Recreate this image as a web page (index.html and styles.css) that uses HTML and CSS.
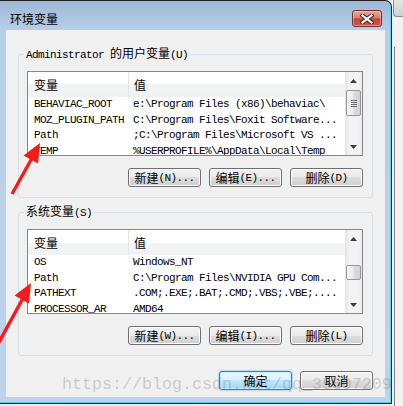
FILE: index.html
```html
<!DOCTYPE html>
<html>
<head>
<meta charset="utf-8">
<link rel="stylesheet" href="styles.css">
</head>
<body>
<div class="desk">
  <div class="win">
    <div class="titlebar">
      <span class="title">环境变量</span>
      <button class="close"><svg width="14" height="10" viewBox="0 0 14 10"><path d="M2.5 1.5 L11.5 8.5 M11.5 1.5 L2.5 8.5" stroke="#4b2622" stroke-width="4.2" stroke-linecap="square" fill="none"/><path d="M2.5 1.5 L11.5 8.5 M11.5 1.5 L2.5 8.5" stroke="#ffffff" stroke-width="2.2" stroke-linecap="square" fill="none"/></svg></button>
    </div>
    <div class="client">
      <fieldset class="group">
        <legend>Administrator <span class="c">的用户变量</span>(U)</legend>
        <div class="list">
          <div class="lv">
            <div class="hdr"><div class="hc1"><span class="c">变量</span></div><div class="hc2"><span class="c">值</span></div></div>
            <div class="row"><div class="c1">BEHAVIAC_ROOT</div><div class="c2">e:\Program Files (x86)\behaviac\</div></div>
            <div class="row"><div class="c1">MOZ_PLUGIN_PATH</div><div class="c2">C:\Program Files\Foxit Software...</div></div>
            <div class="row"><div class="c1">Path</div><div class="c2">;C:\Program Files\Microsoft VS ...</div></div>
            <div class="row"><div class="c1">TEMP</div><div class="c2">%USERPROFILE%\AppData\Local\Temp</div></div>
          </div>
          <div class="sb">
            <div class="ar"><svg width="7" height="4"><polygon points="0,4 3.5,0 7,4" fill="#3c3c3c"/></svg></div>
            <div class="tr"><div class="thumb t1"><div class="grip"></div></div></div>
            <div class="ar"><svg width="7" height="4"><polygon points="0,0 7,0 3.5,4" fill="#3c3c3c"/></svg></div>
          </div>
        </div>
        <div class="btns">
          <button class="btn"><span class="c">新建</span>(N)...</button>
          <button class="btn"><span class="c">编辑</span>(E)...</button>
          <button class="btn"><span class="c">删除</span>(D)</button>
        </div>
      </fieldset>
      <fieldset class="group g2">
        <legend><span class="c">系统变量</span>(S)</legend>
        <div class="list">
          <div class="lv">
            <div class="hdr"><div class="hc1"><span class="c">变量</span></div><div class="hc2"><span class="c">值</span></div></div>
            <div class="row"><div class="c1">OS</div><div class="c2">Windows_NT</div></div>
            <div class="row"><div class="c1">Path</div><div class="c2">C:\Program Files\NVIDIA GPU Com...</div></div>
            <div class="row"><div class="c1">PATHEXT</div><div class="c2">.COM;.EXE;.BAT;.CMD;.VBS;.VBE;....</div></div>
            <div class="row"><div class="c1">PROCESSOR_AR</div><div class="c2">AMD64</div></div>
          </div>
          <div class="sb">
            <div class="ar"><svg width="7" height="4"><polygon points="0,4 3.5,0 7,4" fill="#3c3c3c"/></svg></div>
            <div class="tr"><div class="thumb t2"></div></div>
            <div class="ar"><svg width="7" height="4"><polygon points="0,0 7,0 3.5,4" fill="#3c3c3c"/></svg></div>
          </div>
        </div>
        <div class="btns">
          <button class="btn"><span class="c">新建</span>(W)...</button>
          <button class="btn"><span class="c">编辑</span>(I)...</button>
          <button class="btn"><span class="c">删除</span>(L)</button>
        </div>
      </fieldset>
      <div class="dlg">
        <button class="btn def"><span class="c">确定</span></button>
        <button class="btn"><span class="c">取消</span></button>
      </div>
    </div>
  </div>
  <div class="behind">
    <div class="bh-top"></div>
    <div class="bh-line"></div>
  </div>
</div>
<div class="wm">https://blog.csdn.net/qq_35507209</div>
<svg class="arrows" width="403" height="406" viewBox="0 0 403 406">
  <line x1="12" y1="194" x2="31.5" y2="159" stroke="#f51b1b" stroke-width="3.4"/>
  <polygon points="40,143 38,163.5 23.5,155.5" fill="#f51b1b"/>
  <line x1="-2" y1="344" x2="22.5" y2="299" stroke="#f51b1b" stroke-width="3.4"/>
  <polygon points="31,283 29,303.5 14.5,295.5" fill="#f51b1b"/>
</svg>
</body>
</html>
```

FILE: styles.css
```css
* { box-sizing: border-box; }
html, body { margin: 0; padding: 0; }
body {
  width: 403px;
  height: 406px;
  overflow: hidden;
  position: relative;
  background: #ececec;
  font-family: "Liberation Mono", "Noto Sans CJK SC", monospace;
  font-size: 11px;
  letter-spacing: -0.6px;
  color: #000;
}
.c {
  font-family: "Noto Sans CJK SC", sans-serif;
  font-size: 12px;
  letter-spacing: 0;
}
.desk { display: flex; align-items: flex-start; height: 406px; }

.win {
  flex: none;
  width: 392px;
  height: 404px;
  border: 1px solid #1e1e1e;
  border-left: 0;
  border-radius: 0 7px 0 0;
  background: linear-gradient(#9db8d7 0, #b8cfe8 30px, #bdd3eb 100%);
  box-shadow: inset -1px -1px 0 #5ccdee;
  display: flex;
  flex-direction: column;
}
.titlebar {
  height: 29px;
  display: flex;
  justify-content: space-between;
  align-items: flex-start;
  padding-left: 10px;
}
.title {
  font-family: "Noto Sans CJK SC", sans-serif;
  font-size: 12px;
  letter-spacing: 0;
  line-height: 16px;
  margin-top: 10px;
}
.close {
  width: 30px;
  height: 17px;
  margin: 9px 9px 0 0;
  padding: 0;
  border: 1px solid #7a2e27;
  border-radius: 3px;
  background: linear-gradient(#e9a697 0, #d8806f 45%, #c2463b 52%, #c65c4e 100%);
  box-shadow: inset 0 0 0 1px rgba(255, 220, 210, 0.45);
  display: flex;
  align-items: center;
  justify-content: center;
}
.client {
  flex: 1;
  margin: 0 6px 6px 6px;
  background: #f0f0f0;
  padding: 16px 12px 0;
  display: flex;
  flex-direction: column;
}
.group {
  margin: 0;
  min-width: 0;
  border: 1px solid #d5dfe5;
  border-radius: 3px;
  padding: 9px 9px 10px 8px;
}
.group legend {
  padding: 0 2px;
  margin-left: -3px;
  line-height: 14px;
}
.g2 { margin-top: 6px; }

.list {
  height: 85px;
  border: 1px solid #828790;
  background: #fff;
  display: flex;
}
.lv { flex: 1; min-width: 0; overflow: hidden; }
.hdr {
  height: 25px;
  display: flex;
  background: linear-gradient(#ffffff 0, #ffffff 50%, #f3f4f6 50%, #f1f2f4 100%);
}
.hc1 {
  width: 101px;
  border-right: 1px solid #e3e4e6;
  padding-left: 6px;
  display: flex;
  align-items: center;
}
.hc2 { padding-left: 5px; display: flex; align-items: center; }
.row {
  height: 15.5px;
  line-height: 15.5px;
  display: flex;
  white-space: nowrap;
}
.c1 { width: 100px; flex: none; padding-left: 6px; overflow: hidden; }
.c2 { padding-left: 5px; }

.sb {
  width: 17px;
  flex: none;
  display: flex;
  flex-direction: column;
  background: linear-gradient(to right, #e4e4e4 0, #f3f3f3 25%, #f3f3f3 80%, #eaeaea 100%);
}
.ar { height: 17px; flex: none; display: flex; align-items: center; justify-content: center; }
.tr { flex: 1; }
.thumb {
  margin: 0 1px;
  border: 1px solid #979797;
  border-radius: 2px;
  background: linear-gradient(to right, #f5f5f5 0, #ececec 45%, #dcdcdc 55%, #d2d2d2 100%);
  display: flex;
  align-items: center;
  justify-content: center;
}
.t1 { margin-top: 1px; height: 26px; }
.t2 { margin-top: 18px; height: 15px; }
.grip {
  width: 6px;
  height: 7px;
  background: repeating-linear-gradient(#6e6e6e 0, #6e6e6e 1px, transparent 1px, transparent 2px);
}

.btns {
  display: flex;
  justify-content: flex-end;
  gap: 8px;
  margin-top: 12px;
}
.btn {
  width: 73px;
  height: 19px;
  padding: 0;
  border: 1px solid #707070;
  border-radius: 3px;
  background: linear-gradient(#f2f2f2 0, #ebebeb 50%, #dddddd 50%, #cfcfcf 100%);
  box-shadow: inset 0 0 0 1px #fbfbfb;
  font: inherit;
  letter-spacing: inherit;
  color: #000;
  line-height: 14px;
  display: flex;
  align-items: center;
  justify-content: center;
}
.dlg {
  display: flex;
  justify-content: flex-end;
  gap: 8px;
  margin-top: 15px;
}
.btn.def {
  border-color: #3c7fb1;
  background: linear-gradient(#eaf6fd 0, #d9f0fc 50%, #bee6fd 50%, #a7d9f5 100%);
  box-shadow: inset 0 0 0 1px #c7ecfd, 0 0 1px 1px rgba(80, 170, 230, 0.35);
}

.behind {
  flex: 1;
  height: 406px;
  background: #f2f2f2;
  display: flex;
  flex-direction: column;
}
.bh-top {
  height: 17px;
  margin-left: 1px;
  border: 1px solid #8c8c8c;
  border-top: 0;
  border-right: 0;
  border-radius: 0 0 0 4px;
  background: linear-gradient(#e6e6e6, #cfcfcf);
}
.bh-line {
  flex: 1;
  margin: 30px 0 0 2px;
  border-left: 1px solid #7d7d7d;
}

.wm {
  position: absolute;
  left: 62px;
  top: 376px;
  font-family: "Liberation Mono", monospace;
  font-size: 16.67px;
  letter-spacing: 0;
  line-height: 18px;
  white-space: nowrap;
  color: rgba(100, 100, 100, 0.28);
}
.arrows {
  position: absolute;
  left: 0;
  top: 0;
  pointer-events: none;
}
```
